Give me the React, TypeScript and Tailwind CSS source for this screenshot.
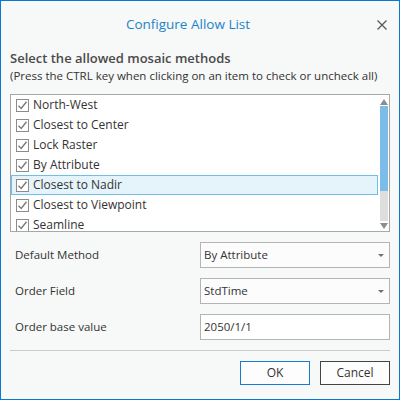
import React from "react";

const items = [
  "North-West",
  "Closest to Center",
  "Lock Raster",
  "By Attribute",
  "Closest to Nadir",
  "Closest to Viewpoint",
  "Seamline",
];

function Check() {
  return (
    <span className="flex h-[13px] w-[13px] shrink-0 items-center justify-center border border-[#8c8c8c] bg-white">
      <svg width="11" height="11" viewBox="0 0 11 11">
        <path d="M1.5 5.8 L4.2 8.5 L9.5 1.8" fill="none" stroke="#7a7a7a" strokeWidth="1.4" />
      </svg>
    </span>
  );
}

function Caret() {
  return (
    <svg width="6" height="3" viewBox="0 0 6 3" className="mr-[2px]">
      <path d="M0 0 L6 0 L3 3 Z" fill="#707070" />
    </svg>
  );
}

export default function App() {
  return (
    <div
      className="flex h-[400px] w-[400px] flex-col border border-[#0a78d2] bg-[#f7f8f8] text-[#333333]"
      style={{ fontFamily: '"Open Sans", "Noto Sans", sans-serif' }}
    >
      {/* title bar */}
      <div className="flex h-[47px] shrink-0 items-center pr-[10px]">
        <div className="flex-1 text-center text-[13.5px] text-[#1c84c6]">Configure Allow List</div>
        <svg width="14" height="14" viewBox="0 0 14 14">
          <path d="M2.5 2.5 L11.5 11.5 M11.5 2.5 L2.5 11.5" stroke="#555" strokeWidth="1.2" />
        </svg>
      </div>

      <div className="flex flex-col px-[9px]">
        <div className="mt-[1px] whitespace-nowrap text-[13px] font-semibold leading-[18px] text-[#4a4a4a]">
          Select the allowed mosaic methods
        </div>
        <div className="mt-[1px] whitespace-nowrap text-[11.5px] leading-[16px] text-[#333]">
          (Press the CTRL key when clicking on an item to check or uncheck all)
        </div>

        {/* list box */}
        <div className="mt-[10px] flex h-[138px] border border-[#a8a8a8] bg-white">
          <div className="flex flex-1 flex-col overflow-hidden pr-[2px]">
            {items.map((it) => {
              const sel = it === "Closest to Nadir";
              return (
                <div
                  key={it}
                  className={
                    "flex h-[20px] shrink-0 items-center gap-[4px] pl-[4px] text-[12px] " +
                    (sel ? "border border-[#72bee9] bg-[#e5f3fb]" : "border border-transparent")
                  }
                >
                  <Check />
                  <span>{it}</span>
                </div>
              );
            })}
          </div>
          {/* scrollbar */}
          <div className="mr-[1px] flex w-[8px] flex-col">
            <div className="flex h-[10px] items-end justify-center">
              <svg width="8" height="6" viewBox="0 0 8 6">
                <path d="M4 0 L8 6 L0 6 Z" fill="#8d8d8d" />
              </svg>
            </div>
            <div className="mt-[1px] flex flex-1 flex-col bg-[#dedede]">
              <div className="h-[85px] bg-[#7bbde8]" />
            </div>
            <div className="flex h-[10px] items-center justify-center">
              <svg width="8" height="6" viewBox="0 0 8 6">
                <path d="M0 0 L8 0 L4 6 Z" fill="#8d8d8d" />
              </svg>
            </div>
          </div>
        </div>

        {/* form rows */}
        <div className="mt-[10px] flex flex-col gap-[10px] text-[11.5px]">
          <div className="flex items-center">
            <div className="w-[190px] pl-[5px]">Default Method</div>
            <div className="flex h-[26px] w-[190px] items-center justify-between border border-[#b4b4b4] bg-[#fcfcfc] pl-[3px] pr-[3px]">
              <span>By Attribute</span>
              <Caret />
            </div>
          </div>
          <div className="flex items-center">
            <div className="w-[190px] pl-[5px]">Order Field</div>
            <div className="flex h-[26px] w-[190px] items-center justify-between border border-[#b4b4b4] bg-[#fcfcfc] pl-[3px] pr-[3px]">
              <span>StdTime</span>
              <Caret />
            </div>
          </div>
          <div className="flex items-center">
            <div className="w-[190px] pl-[5px]">Order base value</div>
            <div className="flex h-[26px] w-[190px] items-center border border-[#b4b4b4] bg-white pl-[3px]">
              <span>2050/1/1</span>
            </div>
          </div>
        </div>

        <div className="mt-[10px] h-px bg-[#cccccc]" />

        <div className="mt-[10px] flex justify-end gap-[10px] text-[12px]">
          <button className="flex h-[24px] w-[70px] items-center justify-center border border-[#1a7ad0] bg-[#fdfdfd] text-[#333]">
            OK
          </button>
          <button className="flex h-[24px] w-[70px] items-center justify-center border border-[#444] bg-[#fdfdfd] text-[#333]">
            Cancel
          </button>
        </div>
      </div>
    </div>
  );
}
